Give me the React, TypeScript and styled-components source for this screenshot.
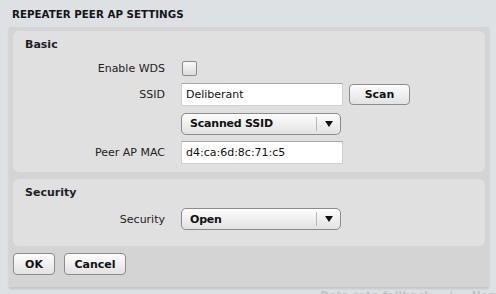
import React from 'react';
import styled, { createGlobalStyle } from 'styled-components';

const GlobalStyle = createGlobalStyle`
  html, body {
    margin: 0;
    padding: 0;
    height: 294px;
    overflow: hidden;
    background: #dde1e4;
    font-family: "DejaVu Sans", Verdana, sans-serif;
    font-size: 11px;
    color: #1e1e1e;
  }
`;

const Page = styled.div`
  width: 496px;
  height: 294px;
  overflow: hidden;
  display: flex;
  flex-direction: column;

  & > * {
    flex-shrink: 0;
  }
`;

const TitleBar = styled.div`
  height: 27px;
  display: flex;
  align-items: center;
  padding-left: 12px;
  font-weight: bold;
  font-size: 10.3px;
  color: #151515;
`;

const Dialog = styled.div`
  margin: 0 7px 0 9px;
  background: #d4d4d4;
  padding: 4px 4px 12px 4px;
  display: flex;
  flex-direction: column;
  gap: 7px;
  box-shadow: 0 2px 2px rgba(0, 0, 0, 0.12);
`;

const Section = styled.div<{ $height: number }>`
  background: #e0e0e0;
  border-radius: 6px;
  height: ${(p) => p.$height}px;
  box-sizing: border-box;
  padding: 5px 0 0 12px;
  display: flex;
  flex-direction: column;
`;

const SectionTitle = styled.div`
  font-weight: bold;
  height: 18px;
  line-height: 18px;
`;

const Row = styled.div<{ $height?: number; $gap?: number }>`
  display: flex;
  align-items: center;
  height: ${(p) => p.$height ?? 23}px;
  margin-top: ${(p) => p.$gap ?? 0}px;
`;

const Label = styled.div`
  width: 140px;
  text-align: right;
  padding-right: 16px;
  color: #222;
`;

const Checkbox = styled.div`
  width: 13px;
  height: 13px;
  margin-left: 1px;
  border: 1px solid #8a8a8a;
  border-radius: 2px;
  background: linear-gradient(#fafafa, #dcdcdc);
`;

const Input = styled.div`
  width: 156px;
  height: 21px;
  background: #fff;
  border: 1px solid #d0d0d0;
  border-top-color: #a8a8a8;
  display: flex;
  align-items: center;
  padding-left: 4px;
  color: #111;
`;

const Button = styled.div<{ $width: number; $height?: number }>`
  width: ${(p) => p.$width}px;
  height: ${(p) => p.$height ?? 22}px;
  box-sizing: border-box;
  border: 1px solid #8c8c8c;
  border-radius: 4px;
  background: linear-gradient(#fdfdfd, #e2e2e2);
  display: flex;
  align-items: center;
  justify-content: center;
  font-weight: bold;
  color: #111;
`;

const ScanButton = styled(Button)`
  margin-left: 6px;
`;

const Select = styled.div`
  width: 160px;
  height: 22px;
  margin-left: 0;
  box-sizing: border-box;
  border: 1px solid #8c8c8c;
  border-radius: 5px;
  background: linear-gradient(#fdfdfd, #e2e2e2);
  display: flex;
  align-items: center;
  font-weight: bold;
  color: #111;
`;

const SelectText = styled.div`
  flex: 1;
  padding-left: 8px;
  letter-spacing: -0.2px;
`;

const Arrow = styled.div`
  width: 23px;
  height: 14px;
  border-left: 1px solid #b8b8b8;
  display: flex;
  align-items: center;
  justify-content: center;
`;

const Footer = styled.div`
  display: flex;
  gap: 9px;
`;

const Faded = styled.div`
  display: flex;
  gap: 18px;
  padding: 2px 0 0 320px;
  color: #c2c5c8;
  font-weight: bold;
  white-space: nowrap;
`;

const DropArrow = () => (
  <svg width="8" height="6" viewBox="0 0 8 6">
    <path d="M0 0 H8 L4 6 Z" fill="#111" />
  </svg>
);

const App = () => {
  return (
    <Page>
      <GlobalStyle />
      <TitleBar>REPEATER PEER AP SETTINGS</TitleBar>
      <Dialog>
        <Section $height={141}>
          <SectionTitle>Basic</SectionTitle>
          <Row $height={29}>
            <Label>Enable WDS</Label>
            <Checkbox />
          </Row>
          <Row>
            <Label>SSID</Label>
            <Input>Deliberant</Input>
            <ScanButton $width={61} $height={21}>Scan</ScanButton>
          </Row>
          <Row $gap={6}>
            <Label />
            <Select>
              <SelectText>Scanned SSID</SelectText>
              <Arrow><DropArrow /></Arrow>
            </Select>
          </Row>
          <Row $gap={6}>
            <Label>Peer AP MAC</Label>
            <Input>d4:ca:6d:8c:71:c5</Input>
          </Row>
        </Section>
        <Section $height={67}>
          <SectionTitle>Security</SectionTitle>
          <Row $height={34}>
            <Label>Security</Label>
            <Select>
              <SelectText>Open</SelectText>
              <Arrow><DropArrow /></Arrow>
            </Select>
          </Row>
        </Section>
        <Footer>
          <Button $width={42}>OK</Button>
          <Button $width={62}>Cancel</Button>
        </Footer>
      </Dialog>
      <Faded>
        <span>Data rate fallback</span>
        <span>|</span>
        <span>Normal</span>
      </Faded>
    </Page>
  );
};

export default App;
